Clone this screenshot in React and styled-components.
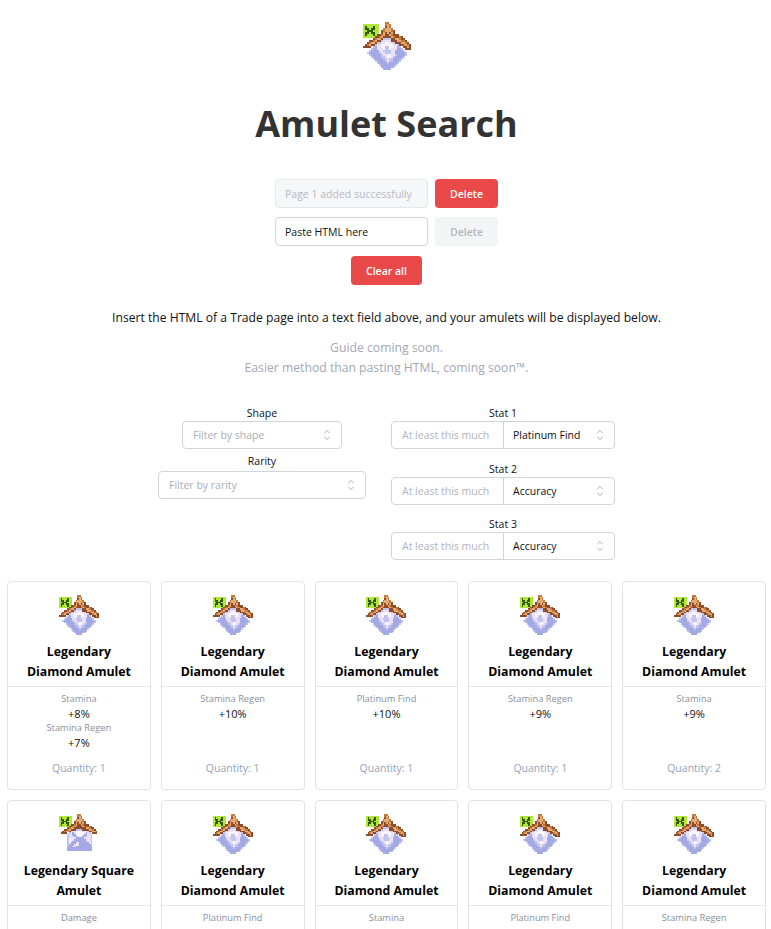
import React from 'react'
import styled, { createGlobalStyle } from 'styled-components'

const GlobalStyle = createGlobalStyle`
  html, body { margin: 0; padding: 0; background: #fff; }
  body { font-family: "Open Sans", "Noto Sans", sans-serif; color: #000; height: 929px; overflow: hidden; }
  * { box-sizing: border-box; }
`

const C = {
  g: '#b4e63a', d: '#2f5a10', O: '#8f4c2a', o: '#c67a3e', y: '#e6ab72',
  l: '#c0c4ef', L: '#a3a9e3', p: '#ece0f7', w: '#faf5fd',
}

const topArt = [
  '...........oo',
  'gggggggg...oyo',
  'gdgggdgg...Oyo',
  'gddgddgg..oyyyo',
  'ggdddggg.OoyyyoO',
  'gddgddgg.OyOyOyO',
  'gdgggdgOOoyOOyoOOO',
]
const diamondArt = [
  ...topArt,
  'ggggggOOoyOOOOyoOOoO',
  '.....OoyyOllllOOyyoOO',
  '...OOoyOOlppppOOOyyooO',
  '..OoyyOllppwwpplOOOyyoO',
  '.OoyOOlppwwwwwwpplOOoyoO',
  'OOOO.lLppwwllwwppLl.OOyO',
  '....lLLpppwllwpppLLl.OOO',
  '...lLLLLppllllppLLLLl',
  '..lLLLLLlpplllppLLLLLl',
  '...lLLLLLlppwwpplLLLLl',
  '....lLLLLllpwwplLLLLl',
  '.....lLLLLllpllLLLLl',
  '......lLLLLlpllLLLl',
  '.......lLLLLlLLLLl',
  '........lLLLLLLLl',
  '.........LLLLLLl',
  '..........LLLL',
]
const squareArt = [
  ...topArt,
  'ggggggOOoyOOOOyoOOoO',
  '.....OoyyOOOOOOOyyoOO',
  '...OOoyOOOllllOOOOyyoO',
  '..OoyyOlppwwwwppplOOyyO',
  '.OOOO.lpLpwwwwwpLpl.OOO',
  '.....lppLLpwwwpLLppl',
  '.....lpppLLpwpLLpppl',
  '.....lppppLLLLLppppl',
  '.....lwppLLLLLLLpppl',
  '.....lwpLLLLLLLLLppl',
  '.....lpLLLppLLLLLLpl',
  '.....lLLLpppLLLLLLLl',
  '.....lLLppLLLLLLLLLl',
  '.....LLLLLLLLLLLLLLL',
  '.....LLLLLLLLLLLLLLL',
]

const Sprite = styled.svg`
  display: block;
  filter: blur(0.4px);
`

const AmuletIcon = ({ shape, size }) => {
  const art = shape === 'Square' ? squareArt : diamondArt
  return (
    <Sprite width={size} height={size} viewBox="0 0 24 24" shapeRendering="crispEdges" aria-hidden="true">
      {art.flatMap((row, y) =>
        row.split('').map((c, x) => (c === '.' ? null : <rect key={`${x}-${y}`} x={x} y={y} width="1" height="1" fill={C[c]} />))
      )}
    </Sprite>
  )
}

const Chevrons = () => (
  <svg width="10" height="14" viewBox="0 0 10 14" fill="none" stroke="#a8adb6" strokeWidth="1" strokeLinecap="round" strokeLinejoin="round">
    <path d="M2.7 4.8 5 2.5 7.3 4.8" />
    <path d="M2.7 9.2 5 11.5 7.3 9.2" />
  </svg>
)

const Page = styled.div`
  display: flex;
  flex-direction: column;
  align-items: center;
  padding: 22px 5px 0 7px;
`
const Title = styled.h1`
  margin: 24px 0 0;
  font-size: 36px;
  line-height: 60px;
  font-weight: 700;
  color: #333333;
`
const Pages = styled.div`
  margin-top: 25px;
  display: flex;
  flex-direction: column;
  align-items: center;
  gap: 9px;
`
const PageRow = styled.div`
  display: flex;
  gap: 7px;
`
const PageInput = styled.div`
  width: 153px;
  height: 29px;
  padding: 0 9px;
  display: flex;
  align-items: center;
  font-size: 10.5px;
  border: 1px solid ${(p) => (p.$done ? '#e5e7eb' : '#d1d5db')};
  border-radius: 4px;
  background: ${(p) => (p.$done ? '#f6f7f9' : '#fff')};
  color: ${(p) => (p.$done ? '#b6bac2' : '#111')};
`
const Button = styled.button`
  height: 29px;
  width: ${(p) => p.$w}px;
  margin-top: ${(p) => p.$top || 0}px;
  padding: 0;
  border: none;
  border-radius: 4px;
  font: 600 10.5px "Open Sans", sans-serif;
  background: ${(p) => (p.$off ? '#f3f4f6' : '#e94949')};
  color: ${(p) => (p.$off ? '#b3b8c0' : '#fff')};
`
const Intro = styled.p`
  margin: 23px 0 0;
  font-size: 12.15px;
  line-height: 20px;
  color: #111;
`
const Guide = styled.p`
  margin: 10px 0 0;
  font-size: 12.2px;
  line-height: 20px;
  text-align: center;
  color: #a4a8b4;
`
const Filters = styled.div`
  margin-top: 26px;
  display: flex;
  justify-content: center;
  gap: 25px;
`
const FilterCol = styled.div`
  display: flex;
  flex-direction: column;
  align-items: center;
`
const StatCol = styled(FilterCol)`
  gap: 10.5px;
`
const Field = styled.div`
  display: flex;
  flex-direction: column;
  align-items: center;
`
const Label = styled.label`
  font-size: 10.5px;
  height: ${(p) => (p.$tall ? 22 : 17)}px;
  line-height: ${(p) => (p.$tall ? 25 : 19)}px;
  color: #111;
`
const Select = styled.div`
  width: ${(p) => p.$w}px;
  height: 28px;
  padding: 0 9px 0 10px;
  display: flex;
  align-items: center;
  justify-content: space-between;
  font-size: 10.5px;
  border: 1px solid #d1d5db;
  border-radius: 4px;
  background: #fff;
  color: #a9aeb7;
`
const StatGroup = styled.div`
  width: 224px;
  height: 28px;
  display: flex;
  border: 1px solid #d1d5db;
  border-radius: 4px;
  font-size: 10.5px;
`
const StatMin = styled.div`
  width: 112px;
  padding-left: 10px;
  display: flex;
  align-items: center;
  color: #b0b4bc;
  border-right: 1px solid #d1d5db;
`
const StatSelect = styled.div`
  flex: 1;
  padding: 0 9px;
  display: flex;
  align-items: center;
  justify-content: space-between;
  color: #111;
`
const Grid = styled.div`
  align-self: stretch;
  margin-top: 21px;
  display: grid;
  grid-template-columns: repeat(5, 1fr);
  gap: 10px;
`
const Card = styled.article`
  height: 209px;
  display: flex;
  flex-direction: column;
  border: 1px solid #e2e3e8;
  border-radius: 4px;
  overflow: hidden;
`
const CardHead = styled.div`
  height: 105px;
  padding-top: 13px;
  display: flex;
  flex-direction: column;
  align-items: center;
  border-bottom: 1px solid #e5e7eb;
`
const CardName = styled.h2`
  margin: 7px 0 0;
  font-size: 12.3px;
  line-height: 20px;
  font-weight: 700;
  text-align: center;
`
const CardBody = styled.div`
  position: relative;
  flex: 1;
  padding-top: 5px;
  display: flex;
  flex-direction: column;
  align-items: center;
`
const StatName = styled.div`
  font-size: 9.3px;
  line-height: 14px;
  color: #8a909b;
`
const StatValue = styled.div`
  font-size: 11px;
  line-height: 15px;
  color: #111;
`
const Quantity = styled.div`
  position: absolute;
  left: 0;
  right: 0;
  bottom: 13px;
  text-align: center;
  font-size: 10.5px;
  line-height: 15px;
  color: #94a3b8;
`

const amulets = [
  { shape: 'Diamond', stats: [['Stamina', 8], ['Stamina Regen', 7]], qty: 1 },
  { shape: 'Diamond', stats: [['Stamina Regen', 10]], qty: 1 },
  { shape: 'Diamond', stats: [['Platinum Find', 10]], qty: 1 },
  { shape: 'Diamond', stats: [['Stamina Regen', 9]], qty: 1 },
  { shape: 'Diamond', stats: [['Stamina', 9]], qty: 2 },
  { shape: 'Square', stats: [['Damage', 8]], qty: 1 },
  { shape: 'Diamond', stats: [['Platinum Find', 8]], qty: 1 },
  { shape: 'Diamond', stats: [['Stamina', 8]], qty: 1 },
  { shape: 'Diamond', stats: [['Platinum Find', 7]], qty: 1 },
  { shape: 'Diamond', stats: [['Stamina Regen', 7]], qty: 1 },
]

const App = () => (
  <Page>
    <GlobalStyle />
    <AmuletIcon shape="Diamond" size={48} />
    <Title>Amulet Search</Title>
    <Pages>
      <PageRow>
        <PageInput $done>Page 1 added successfully</PageInput>
        <Button $w={63}>Delete</Button>
      </PageRow>
      <PageRow>
        <PageInput>Paste HTML here</PageInput>
        <Button $w={63} $off>Delete</Button>
      </PageRow>
      <Button $w={71} $top={1}>Clear all</Button>
    </Pages>
    <Intro>Insert the HTML of a Trade page into a text field above, and your amulets will be displayed below.</Intro>
    <Guide>
      Guide coming soon.<br />
      Easier method than pasting HTML, coming soon™.
    </Guide>
    <Filters>
      <FilterCol>
        <Field>
          <Label>Shape</Label>
          <Select $w={160}>Filter by shape<Chevrons /></Select>
        </Field>
        <Field>
          <Label $tall>Rarity</Label>
          <Select $w={208}>Filter by rarity<Chevrons /></Select>
        </Field>
      </FilterCol>
      <StatCol>
        {[['Stat 1', 'Platinum Find'], ['Stat 2', 'Accuracy'], ['Stat 3', 'Accuracy']].map(([label, value]) => (
          <Field key={label}>
            <Label>{label}</Label>
            <StatGroup>
              <StatMin>At least this much</StatMin>
              <StatSelect>{value}<Chevrons /></StatSelect>
            </StatGroup>
          </Field>
        ))}
      </StatCol>
    </Filters>
    <Grid>
      {amulets.map((a, i) => (
        <Card key={i}>
          <CardHead>
            <AmuletIcon shape={a.shape} size={40} />
            <CardName>
              {a.shape === 'Square' ? <>Legendary Square<br />Amulet</> : <>Legendary<br />Diamond Amulet</>}
            </CardName>
          </CardHead>
          <CardBody>
            {a.stats.map(([name, val]) => (
              <React.Fragment key={name}>
                <StatName>{name}</StatName>
                <StatValue>+{val}%</StatValue>
              </React.Fragment>
            ))}
            <Quantity>Quantity: {a.qty}</Quantity>
          </CardBody>
        </Card>
      ))}
    </Grid>
  </Page>
)

export default App
